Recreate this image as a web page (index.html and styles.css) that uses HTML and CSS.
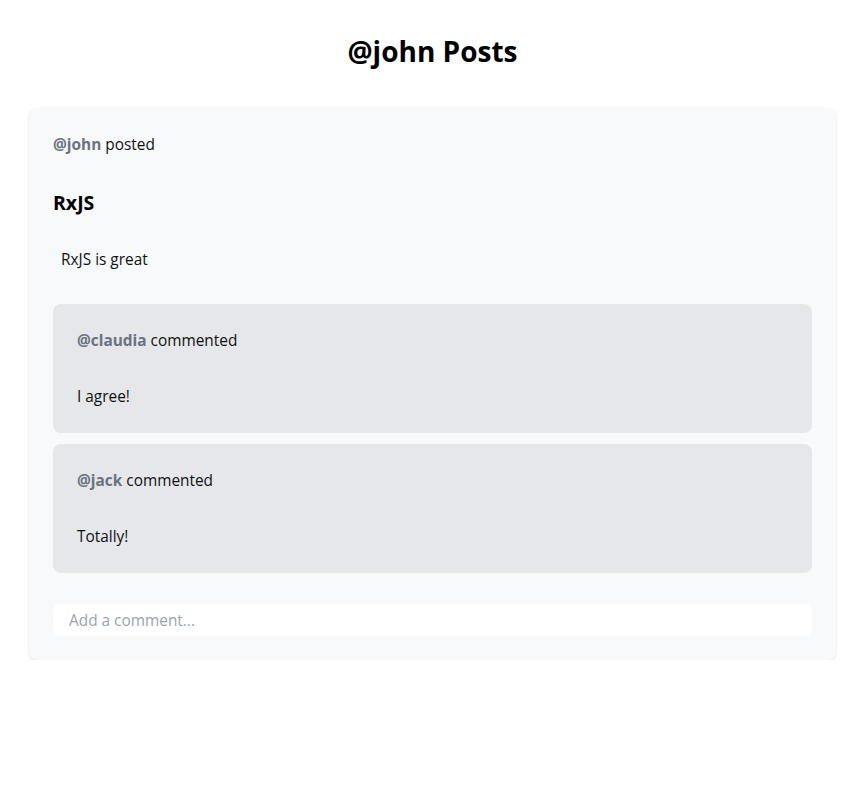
FILE: index.html
```html
<!DOCTYPE html>
<html lang="en">
<head>
<meta charset="utf-8">
<title>@john Posts</title>
<link rel="stylesheet" href="styles.css">
</head>
<body>
  <h1 class="page-title">@john Posts</h1>
  <article class="post">
    <p class="meta"><span class="user">@john</span> posted</p>
    <h2 class="post-title">RxJS</h2>
    <p class="post-body">RxJS is great</p>
    <div class="comments">
      <div class="comment">
        <p class="meta"><span class="user">@claudia</span> commented</p>
        <p class="comment-body">I agree!</p>
      </div>
      <div class="comment">
        <p class="meta"><span class="user">@jack</span> commented</p>
        <p class="comment-body">Totally!</p>
      </div>
    </div>
    <input class="comment-input" type="text" placeholder="Add a comment...">
  </article>
</body>
</html>
```

FILE: styles.css
```css
* { box-sizing: border-box; }
html, body { background: #fff; }
body {
  margin: 0;
  padding: 0 29px;
  font-family: "Open Sans", "Noto Sans", sans-serif;
  font-size: 15.4px;
  line-height: 24px;
  color: #111;
}
.page-title {
  margin: 0;
  padding: 32px 0 38px;
  text-align: center;
  font-size: 28px;
  line-height: 38px;
  font-weight: 700;
  color: #000;
}
.post {
  background: #f8f9fb;
  border-radius: 8px;
  box-shadow: 0 1px 3px rgba(0,0,0,0.12);
  padding: 25px 24px 24px;
  display: flex;
  flex-direction: column;
}
.meta { margin: 0; }
.user { font-weight: 700; color: #6b7280; }
.post-title {
  margin: 32px 0 0;
  font-size: 19.5px;
  line-height: 28px;
  font-weight: 700;
  color: #000;
}
.post-body { margin: 31px 0 0; padding-left: 8px; }
.comments {
  margin-top: 32px;
  display: flex;
  flex-direction: column;
  gap: 11px;
}
.comment {
  background: #e5e7eb;
  border-radius: 8px;
  padding: 25px 24px 24px;
}
.comment-body { margin: 32px 0 0; }
.comment-input {
  margin-top: 31px;
  height: 32px;
  border: none;
  border-radius: 6px;
  background: #fff;
  padding: 0 16px;
  font-family: inherit;
  font-size: 15.4px;
  color: #111;
  outline: none;
}
.comment-input::placeholder { color: #9ca3af; }
```
